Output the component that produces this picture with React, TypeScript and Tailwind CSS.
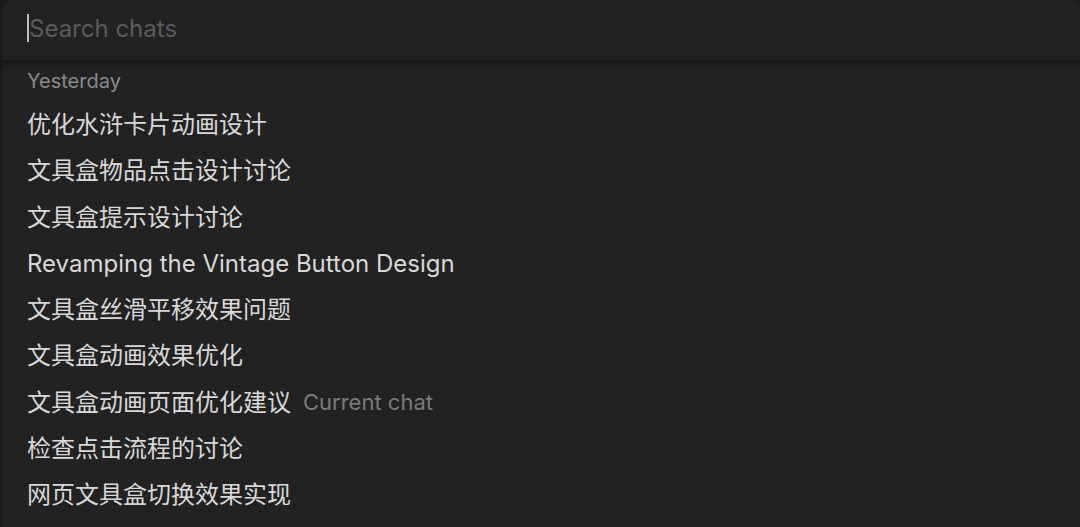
import { useState } from "react";

const chats = [
	{ title: "优化水浒卡片动画设计" },
	{ title: "文具盒物品点击设计讨论" },
	{ title: "文具盒提示设计讨论" },
	{ title: "Revamping the Vintage Button Design" },
	{ title: "文具盒丝滑平移效果问题" },
	{ title: "文具盒动画效果优化" },
	{ title: "文具盒动画页面优化建议", current: true },
	{ title: "检查点击流程的讨论" },
	{ title: "网页文具盒切换效果实现" },
];

// little bits of the editor that peek out behind the dialog
const marks = [
	{ y: "top-[156px]", color: "bg-[#b07fc0]" },
	{ y: "top-[212px]", color: "bg-[#b07fc0]" },
	{ y: "top-[256px]", color: "bg-[#6fa8d6]" },
	{ y: "top-[330px]", color: "bg-[#c4835a]" },
	{ y: "top-[375px]", color: "bg-[#c4835a]" },
	{ y: "top-[420px]", color: "bg-[#c4835a]" },
	{ y: "top-[466px]", color: "bg-[#c4835a]" },
];

export default function App() {
	const [query, setQuery] = useState("");

	return (
		<div
			className="flex h-[527px] w-[1080px] overflow-hidden bg-[#1b1b1b]"
			style={{ fontFamily: 'Inter, "Noto Sans CJK SC", sans-serif' }}
		>
			<div className="relative w-[4px] shrink-0 border-r border-[#151515]">
				<div className="absolute left-0 top-[37px] h-px w-full bg-[#2a2a2a]" />
				<div className="absolute left-0 top-[104px] h-px w-full bg-[#2a2a2a]" />
				{marks.map((m, i) => (
					<div key={i} className={`absolute left-0 h-[8px] w-[2px] rounded-r ${m.y} ${m.color}`} />
				))}
			</div>

			<div className="mr-[-2px] flex min-w-0 flex-1 flex-col rounded-tl-[10px] rounded-tr-[10px] bg-[#222222]">
				<div className="relative flex h-[60px] shrink-0 items-center pl-[27px] pb-[3px]">
					<input
						autoFocus
						value={query}
						onChange={(e) => setQuery(e.target.value)}
						placeholder="Search chats"
						className="w-full bg-transparent text-[24px] text-[#d4d4d4] caret-[#cfcfcf] outline-none placeholder:text-[#5b5b5b]"
					/>
					{query === "" && <div className="absolute left-[25px] top-[14px] h-[28px] w-[2px] bg-[#bdbdbd]" />}
				</div>
				<div className="h-[3px] shrink-0 bg-[#191919] shadow-[0_2px_4px_rgba(0,0,0,0.35)]" />

				<div className="flex flex-col pl-[25px] pt-[4px]">
					<div className="flex h-[28px] items-center text-[20px] text-[#8a8a8a]">Yesterday</div>
					<ul className="mt-[7px]">
						{chats.map((c) => (
							<li key={c.title} className="flex h-[46.25px] items-center gap-[12px] whitespace-nowrap">
								<span className="text-[24px] text-[#d8d8d8]">{c.title}</span>
								{c.current && <span className="text-[22px] text-[#7a7a7a]">Current chat</span>}
							</li>
						))}
					</ul>
				</div>
			</div>
		</div>
	);
}
